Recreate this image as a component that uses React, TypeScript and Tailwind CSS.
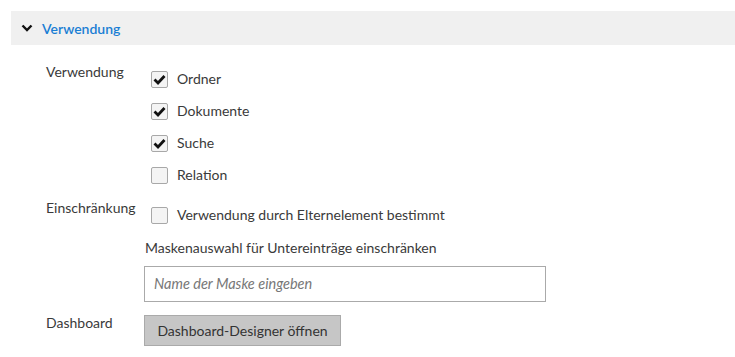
import React from "react";

function Check({ checked, label }: { checked: boolean; label: string }) {
  return (
    <div className="flex h-[32px] items-center pl-[7px]">
      <div className="flex h-[17px] w-[17px] items-center justify-center rounded-[2px] border border-[#a8a8a8] bg-[#f4f4f4]">
        {checked && (
          <svg width="13" height="11" viewBox="0 0 13 11">
            <path d="M1.5 5.5 L5 9 L11.5 2" fill="none" stroke="#111" strokeWidth="2.8" strokeLinecap="butt" strokeLinejoin="miter" />
          </svg>
        )}
      </div>
      <span className="ml-[9px] text-[14px] leading-[18px] text-[#3a3a3a]">{label}</span>
    </div>
  );
}

export default function App() {
  return (
    <div className="w-[735px] bg-white pt-[11px]" style={{ fontFamily: "Lato, 'Liberation Sans', sans-serif" }}>
      <div className="ml-[11px] flex h-[34px] items-center bg-[#f0f0f0]">
        <svg className="ml-[10px]" width="12" height="8" viewBox="0 0 12 8">
          <path d="M1.5 1.5 L6 6 L10.5 1.5" fill="none" stroke="#111" strokeWidth="2.4" />
        </svg>
        <span className="ml-[9px] text-[14px] font-semibold text-[#1a7ed4]">Verwendung</span>
      </div>

      <div className="mt-[18px] pl-[46px]">
        <div className="grid grid-cols-[98px_1fr]">
          <div className="text-[14px] leading-[18px] text-[#3a3a3a]">Verwendung</div>
          <div className="flex flex-col">
            <Check checked label="Ordner" />
            <Check checked label="Dokumente" />
            <Check checked label="Suche" />
            <Check checked={false} label="Relation" />
          </div>
        </div>

        <div className="mt-[8px] grid grid-cols-[98px_1fr]">
          <div className="text-[14px] leading-[18px] text-[#3a3a3a]">Einschränkung</div>
          <div className="flex flex-col">
            <Check checked={false} label="Verwendung durch Elternelement bestimmt" />
            <div className="mt-[8px] pl-[1px] text-[14px] leading-[18px] text-[#3a3a3a]">
              Maskenauswahl für Untereinträge einschränken
            </div>
            <div className="mt-[9px] flex h-[36px] w-[402px] items-center border border-[#aaa] bg-white pl-[9px]">
              <span className="text-[14.5px] italic text-[#777]">Name der Maske eingeben</span>
            </div>
          </div>
        </div>

        <div className="mt-[12px] grid grid-cols-[98px_1fr]">
          <div className="text-[14px] leading-[18px] text-[#3a3a3a]">Dashboard</div>
          <div className="pt-[1px]">
            <div className="flex h-[31px] w-[197px] items-center justify-center border border-[#aaa] bg-[#c6c6c6] text-[14px] text-[#333]">
              Dashboard-Designer öffnen
            </div>
          </div>
        </div>
      </div>
    </div>
  );
}
